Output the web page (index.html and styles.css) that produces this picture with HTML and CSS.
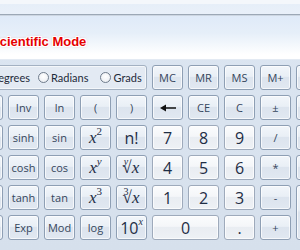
FILE: index.html
```html
<!DOCTYPE html>
<html>
<head>
<meta charset="utf-8">
<link rel="stylesheet" href="styles.css">
</head>
<body>
<div class="app">
  <div class="titlebar"></div>
  <div class="display"><span class="mode">Scientific Mode</span></div>
  <div class="pad">
    <div class="angle">
      <label class="opt"><span class="radio"></span>Degrees</label>
      <label class="opt opt-rad"><span class="radio"></span>Radians</label>
      <label class="opt opt-grad"><span class="radio"></span>Grads</label>
    </div>
    <div class="key">MC</div>
    <div class="key">MR</div>
    <div class="key">MS</div>
    <div class="key">M+</div>
    <div class="key">M-</div>

    <div class="key"></div>
    <div class="key">Inv</div>
    <div class="key">ln</div>
    <div class="key">(</div>
    <div class="key">)</div>
    <div class="key"><svg class="back" width="18" height="10" viewBox="0 0 18 10"><path d="M1 5 L7 1.5 L7 4.2 L17 4.2 L17 5.8 L7 5.8 L7 8.5 Z" fill="#111"/></svg></div>
    <div class="key">CE</div>
    <div class="key">C</div>
    <div class="key">±</div>
    <div class="key">√</div>

    <div class="key">Int</div>
    <div class="key">sinh</div>
    <div class="key">sin</div>
    <div class="key math"><i>x</i><span class="sup">2</span></div>
    <div class="key big">n!</div>
    <div class="key num">7</div>
    <div class="key num">8</div>
    <div class="key num">9</div>
    <div class="key">/</div>
    <div class="key">%</div>

    <div class="key">dms</div>
    <div class="key">cosh</div>
    <div class="key">cos</div>
    <div class="key math"><i>x</i><span class="sup"><i>y</i></span></div>
    <div class="key math"><span class="idx"><i>y</i></span>√<i>x</i></div>
    <div class="key num">4</div>
    <div class="key num">5</div>
    <div class="key num">6</div>
    <div class="key">*</div>
    <div class="key">1/x</div>

    <div class="key">π</div>
    <div class="key">tanh</div>
    <div class="key">tan</div>
    <div class="key math"><i>x</i><span class="sup">3</span></div>
    <div class="key math"><span class="idx">3</span>√<i>x</i></div>
    <div class="key num">1</div>
    <div class="key num">2</div>
    <div class="key num">3</div>
    <div class="key">-</div>
    <div class="key eq">=</div>

    <div class="key">F-E</div>
    <div class="key">Exp</div>
    <div class="key">Mod</div>
    <div class="key">log</div>
    <div class="key big">10<span class="sup"><i>x</i></span></div>
    <div class="key num zero">0</div>
    <div class="key num">.</div>
    <div class="key">+</div>
  </div>
</div>
</body>
</html>
```
FILE: styles.css
```css
html, body {
  margin: 0;
  padding: 0;
}
body {
  width: 300px;
  height: 250px;
  overflow: hidden;
  background: #d9e3ef;
  font-family: "Open Sans", "Noto Sans", sans-serif;
}
.app {
  width: 300px;
  height: 250px;
  overflow: hidden;
  background: linear-gradient(to bottom, #dce6f2, #d6e0ec);
}
.titlebar {
  height: 16px;
  background: linear-gradient(to bottom,
    #f4f7fb 0, #f4f7fb 4px,
    #e6eef8 4px, #e9f0f9 14px,
    #9ca8b6 14px, #9ca8b6 15px,
    #cdd6e1 15px, #cdd6e1 16px);
}
.display {
  height: 44px;
  box-sizing: border-box;
  padding-top: 13px;
  background: linear-gradient(to bottom, #dfeaf8 0, #e6eff9 40%, #ffffff 90%, #ffffff 100%);
  border-bottom: 1px solid #e3eaf3;
  white-space: nowrap;
}
.mode {
  display: inline-block;
  margin-left: -9px;
  font-family: "Liberation Sans", Arial, sans-serif;
  font-weight: bold;
  font-size: 13px;
  line-height: 16px;
  color: #e60000;
  text-shadow:
    1px 0 #fff, -1px 0 #fff, 0 1px #fff, 0 -1px #fff,
    1px 1px #fff, -1px -1px #fff, 1px -1px #fff, -1px 1px #fff,
    0 0 3px rgba(180, 40, 40, 0.55);
}
.pad {
  display: grid;
  grid-template-columns: repeat(10, 31px);
  grid-auto-rows: 25px;
  gap: 5px;
  margin-left: -28px;
  padding-top: 5px;
}
.angle {
  grid-column: 1 / span 5;
  border: 1px solid #a3b1c2;
  border-radius: 3px;
  background: #e3eaf3;
  box-shadow: inset 0 0 0 1px rgba(255,255,255,0.6);
  display: flex;
  align-items: center;
  padding-left: 4px;
  font-family: Lato, "Open Sans", sans-serif;
  font-size: 11px;
  color: #1e2a3a;
}
.opt {
  display: flex;
  align-items: center;
  gap: 2px;
}
.opt-rad {
  margin-left: 8px;
}
.opt-grad {
  margin-left: 12px;
}
.radio {
  width: 9px;
  height: 9px;
  border-radius: 50%;
  border: 1px solid #6f7c8c;
  background: radial-gradient(circle at 50% 40%, #ffffff, #e6eaf0);
}
.key {
  box-sizing: border-box;
  border: 1px solid #8e9fb4;
  border-radius: 3px;
  background: linear-gradient(to bottom, #f2f6fa 0, #e9eff6 45%, #dce4ee 50%, #e1e8f1 100%);
  box-shadow: inset 0 0 0 1px rgba(255,255,255,0.7);
  display: flex;
  align-items: center;
  justify-content: center;
  font-size: 11px;
  color: #35465c;
  white-space: nowrap;
}
.num {
  background: linear-gradient(to bottom, #fbfcfd 0, #f4f6f9 45%, #e9edf2 50%, #eef1f5 100%);
  border-color: #9eaabb;
  font-size: 16px;
  color: #1e2d45;
}
.big {
  font-size: 16px;
  color: #1e2d45;
}
.big .sup {
  font-family: "Liberation Serif", serif;
  font-size: 10px;
  position: relative;
  top: -6px;
}
.math {
  font-family: "Liberation Serif", serif;
  font-size: 17px;
  color: #1e2d45;
}
.math .sup {
  font-size: 11px;
  position: relative;
  top: -7px;
}
.idx {
  font-size: 10px;
  margin-right: -6px;
  position: relative;
  top: -6px;
}
.zero {
  grid-column: 6 / span 2;
}
.eq {
  grid-column: 10;
  grid-row: 5 / span 2;
}
.back {
  display: block;
}
```
